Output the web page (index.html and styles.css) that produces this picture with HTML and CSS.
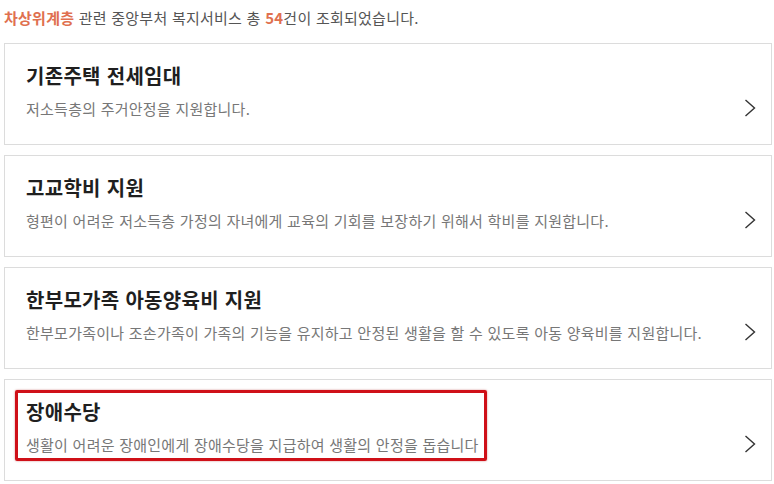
FILE: index.html
```html
<!DOCTYPE html>
<html lang="ko">

<head>
    <meta charset="UTF-8">
    <meta name="viewport" content="width=device-width, initial-scale=1.0">
    <title>복지서비스 조회 결과</title>
    <link rel="stylesheet" href="styles.css">
</head>

<body>
    <div class="result-wrap">
        <p class="result-count">
            <span class="hl">차상위계층</span> 관련 중앙부처 복지서비스 총 <span class="hl">54</span>건이 조회되었습니다.
        </p>

        <ul class="service-list">
            <li class="service-card">
                <h3>기존주택 전세임대</h3>
                <div class="desc-row">
                    <p>저소득층의 주거안정을 지원합니다.</p>
                    <svg class="chevron" width="12" height="18" viewBox="0 0 12 18"><path d="M1.5 1 L10.5 9 L1.5 17" /></svg>
                </div>
            </li>
            <li class="service-card">
                <h3>고교학비 지원</h3>
                <div class="desc-row">
                    <p>형편이 어려운 저소득층 가정의 자녀에게 교육의 기회를 보장하기 위해서 학비를 지원합니다.</p>
                    <svg class="chevron" width="12" height="18" viewBox="0 0 12 18"><path d="M1.5 1 L10.5 9 L1.5 17" /></svg>
                </div>
            </li>
            <li class="service-card">
                <h3>한부모가족 아동양육비 지원</h3>
                <div class="desc-row">
                    <p>한부모가족이나 조손가족이 가족의 기능을 유지하고 안정된 생활을 할 수 있도록 아동 양육비를 지원합니다.</p>
                    <svg class="chevron" width="12" height="18" viewBox="0 0 12 18"><path d="M1.5 1 L10.5 9 L1.5 17" /></svg>
                </div>
            </li>
            <li class="service-card">
                <h3>장애수당</h3>
                <div class="desc-row">
                    <p>생활이 어려운 장애인에게 장애수당을 지급하여 생활의 안정을 돕습니다</p>
                    <svg class="chevron" width="12" height="18" viewBox="0 0 12 18"><path d="M1.5 1 L10.5 9 L1.5 17" /></svg>
                </div>
                <div class="mark-box"></div>
            </li>
        </ul>
    </div>
</body>

</html>
```

FILE: styles.css
```css
body {
    margin: 0;
    background-color: #fff;
    font-family: "Noto Sans CJK KR", "Noto Sans", sans-serif;
    color: #222;
}

.result-wrap {
    padding: 0 2px 0 4px;
}

.result-count {
    margin: 0;
    padding: 8px 0 8px;
    font-size: 15px;
    line-height: 20px;
    letter-spacing: 0.25px;
    color: #555;
}

.result-count .hl {
    color: #e0704f;
    font-weight: bold;
}

.service-list {
    list-style: none;
    margin: 7px 0 0;
    padding: 0;
    display: flex;
    flex-direction: column;
    gap: 10px;
}

.service-card {
    position: relative;
    border: 1px solid #dcdcdc;
    padding: 18px 15px 25px 21px;
    background-color: #fff;
}

.service-card h3 {
    margin: 0;
    font-size: 20px;
    line-height: 28px;
    letter-spacing: 0.3px;
    font-weight: bold;
    color: #1f1f1f;
}

.desc-row {
    display: flex;
    justify-content: space-between;
    align-items: center;
    margin-top: 9px;
    height: 20px;
}

.desc-row p {
    margin: 0;
    font-size: 15px;
    line-height: 20px;
    letter-spacing: 0.25px;
    color: #777;
}

.chevron {
    flex-shrink: 0;
    margin-top: -3px;
}

.chevron path {
    fill: none;
    stroke: #333;
    stroke-width: 1.4;
}

.mark-box {
    position: absolute;
    top: 10px;
    left: 10px;
    width: 466px;
    height: 65px;
    border: 3px solid #cf1018;
    border-radius: 2px;
    box-shadow: 0 0 2px rgba(160, 0, 0, 0.5);
}
```
